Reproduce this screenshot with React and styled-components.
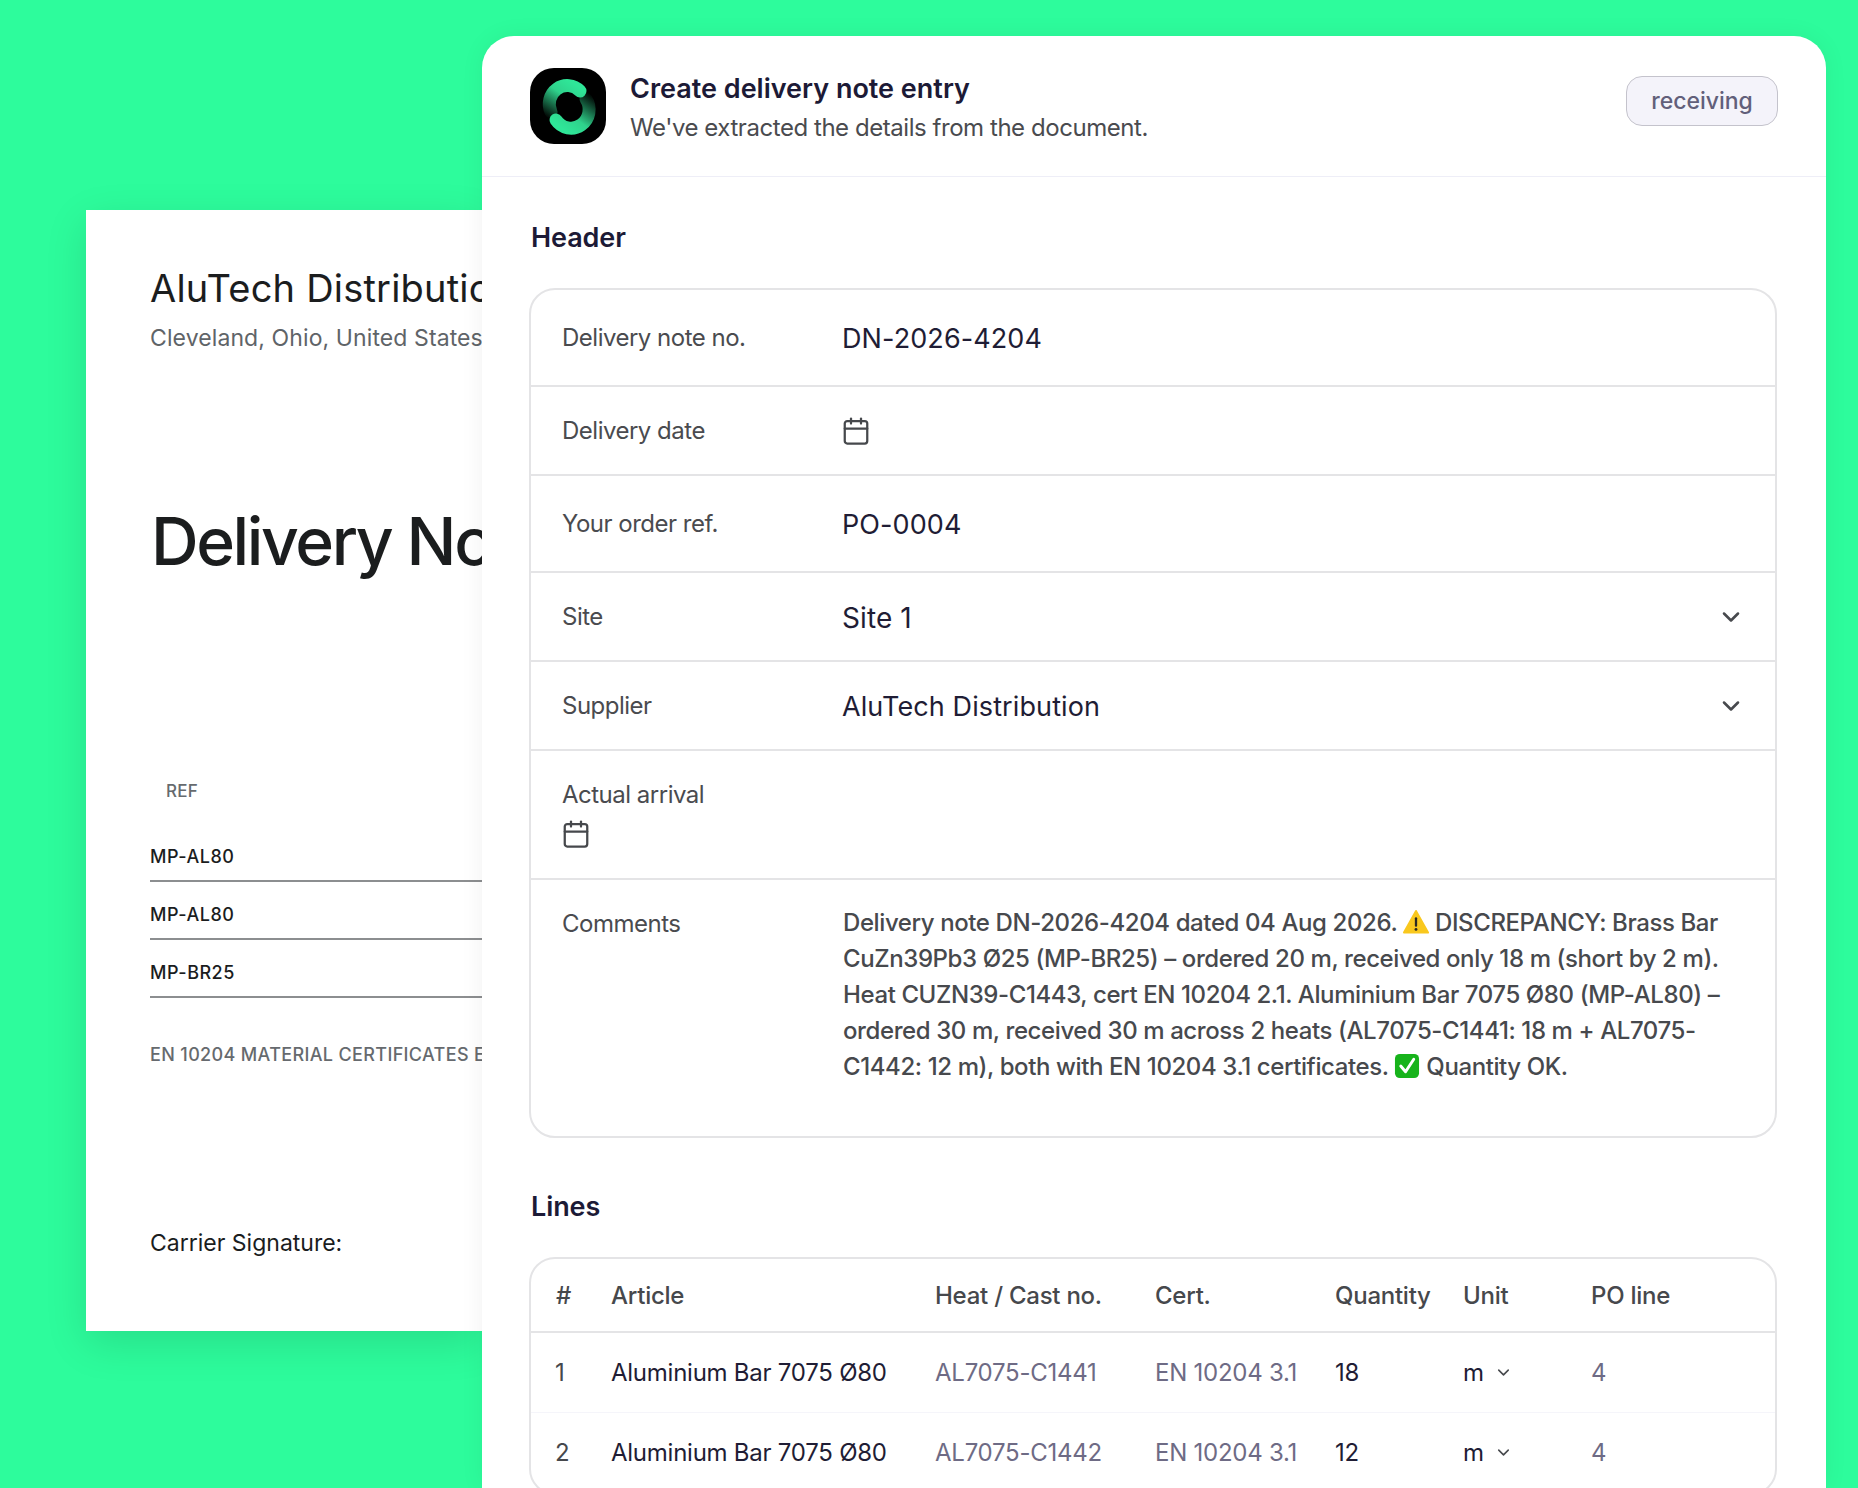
import React from "react";
import styled, { createGlobalStyle } from "styled-components";
import { Calendar, ChevronDown } from "lucide-react";

const GlobalStyle = createGlobalStyle`
  html, body {
    margin: 0;
    padding: 0;
    height: 1488px;
    overflow: hidden;
    background: #2dfc9c;
    font-family: Inter, "Liberation Sans", sans-serif;
  }
  * {
    box-sizing: border-box;
  }
`;

const Stage = styled.div`
  display: flex;
  align-items: flex-start;
  height: 1488px;
  padding: 36px 0 0 86px;
  overflow: hidden;
`;

// Paper document behind the form

const Paper = styled.div`
  flex: none;
  width: 396px;
  height: 1121px;
  margin-top: 174px;
  padding-left: 64px;
  background: #fff;
  box-shadow: 0 12px 40px rgba(0, 0, 0, 0.12);
  overflow: hidden;
  white-space: nowrap;
  color: #1b1d1e;
`;

const Company = styled.div`
  margin-top: 54px;
  font-size: 38px;
  line-height: 48px;
  letter-spacing: 0.2px;
`;

const Place = styled.div`
  margin-top: 11px;
  font-size: 23px;
  line-height: 30px;
  letter-spacing: 0.1px;
  color: #5f6468;
`;

const PaperTitle = styled.div`
  margin: 146px 0 0 1px;
  font-size: 66px;
  line-height: 84px;
  font-weight: 450;
  letter-spacing: -2.4px;
`;

const RefLabel = styled.div`
  margin: 198px 0 23px 16px;
  font-size: 17px;
  line-height: 20px;
  font-weight: 500;
  letter-spacing: 0.3px;
  color: #666a6e;
`;

const RefRow = styled.div`
  height: 58px;
  padding-top: 21px;
  border-bottom: 2px solid #8c8e90;
  font-size: 18px;
  line-height: 24px;
  font-weight: 500;
  letter-spacing: 0.5px;
`;

const CertNote = styled.div`
  margin-top: 45px;
  font-size: 18px;
  line-height: 24px;
  font-weight: 500;
  letter-spacing: 0.35px;
  color: #666a6e;
`;

const Signature = styled.div`
  margin-top: 161px;
  font-size: 23px;
  line-height: 30px;
`;

// Form card

const Card = styled.div`
  position: relative;
  flex: none;
  width: 1344px;
  height: 1452px;
  border-radius: 32px 32px 0 0;
  background: #fff;
  box-shadow: 0 0 24px rgba(0, 0, 0, 0.06);
  overflow: hidden;
  color: #1c1a36;
`;

const CardHeader = styled.header`
  display: flex;
  align-items: center;
  gap: 24px;
  height: 141px;
  padding: 0 48px;
  border-bottom: 1px solid #eeeef7;
`;

const HeaderText = styled.div`
  flex: 1;
  padding-top: 3px;
`;

const CardTitle = styled.div`
  font-size: 27px;
  line-height: 36px;
  font-weight: 600;
`;

const CardSubtitle = styled.div`
  margin-top: 5px;
  font-size: 24px;
  line-height: 32px;
  letter-spacing: -0.45px;
  color: #4a4b4f;
`;

const Badge = styled.span`
  display: flex;
  align-items: center;
  justify-content: center;
  width: 152px;
  height: 50px;
  margin-top: -10px;
  border: 1px solid #c4c3cc;
  border-radius: 16px;
  background: #f4f3fa;
  font-size: 23px;
  font-weight: 500;
  color: #625f7a;
`;

const Content = styled.div`
  padding: 45px 49px 0 47px;
`;

const SectionTitle = styled.h2`
  margin: ${({ $top }) => $top || 0}px 0 ${({ $bottom }) => $bottom}px;
  padding-left: 2px;
  font-size: 27px;
  line-height: 32px;
  font-weight: 600;
  letter-spacing: -0.1px;
`;

const Panel = styled.div`
  border: 2px solid #e4e4e6;
  border-radius: 26px;
  overflow: hidden;
`;

const FieldRow = styled.div`
  display: grid;
  grid-template-columns: 280px 1fr auto;
  align-items: center;
  height: ${({ $height }) => $height}px;
  padding: 0 30px 0 31px;
  border-bottom: 2px solid #e4e4e6;
  &:last-child {
    border-bottom: 0;
  }
`;

const StackedField = styled(FieldRow)`
  display: flex;
  flex-direction: column;
  align-items: flex-start;
  justify-content: flex-start;
  padding-top: 26px;
  gap: 6px;
`;

const CommentField = styled(FieldRow)`
  align-items: start;
  padding-top: 26px;
`;

const FieldLabel = styled.div`
  font-size: 24px;
  line-height: 36px;
  letter-spacing: -0.5px;
  color: #4a4b4f;
`;

const FieldValue = styled.div`
  margin-top: ${({ $lift }) => ($lift ? 2 : 3)}px;
  font-size: ${({ $size }) => $size || 27}px;
  line-height: 36px;
  letter-spacing: 0.1px;
  color: #1f1d35;
`;

const CalendarIcon = styled(Calendar)`
  display: block;
  margin-left: ${({ $shift }) => $shift || 0}px;
  color: #46484c;
`;

const SelectIcon = styled(ChevronDown)`
  display: block;
  color: #47494d;
`;

const Comments = styled.div`
  margin-top: -1px;
  padding-left: 1px;
  font-size: 24px;
  line-height: 36px;
  font-weight: 500;
  letter-spacing: -0.4px;
  color: #47494d;
  white-space: nowrap;
`;

const Emoji = styled.svg`
  display: inline-block;
  width: 26px;
  height: 26px;
  vertical-align: -4px;
`;

const LineRow = styled.div`
  display: grid;
  grid-template-columns: 55px 324px 220px 180px 128px 128px 1fr;
  align-items: center;
  height: ${({ $head }) => ($head ? 74 : 80)}px;
  padding-left: 25px;
  border-bottom: ${({ $head }) => ($head ? "2px solid #e4e4e6" : "1px solid #f5f5fa")};
  font-size: 24px;
  font-weight: ${({ $head }) => ($head ? 500 : 400)};
  letter-spacing: -0.25px;
  color: ${({ $head }) => ($head ? "#46484c" : "#1f1d35")};
`;

const Cell = styled.div`
  white-space: nowrap;
  color: ${({ $muted }) => ($muted ? "#6e6b85" : "inherit")};
`;

const RowNumber = styled(Cell)`
  margin-left: -1px;
  color: #46484c;
`;

const UnitCell = styled(Cell)`
  display: flex;
  align-items: center;
  gap: 10px;
`;

const WarningEmoji = () => (
  <Emoji viewBox="0 0 27 27">
    <path d="M13.5 2 L26 24.5 H1 Z" fill="#f9c81e" stroke="#f9c81e" strokeWidth="2" strokeLinejoin="round" />
    <rect x="12.3" y="8.5" width="2.4" height="10" rx="1.2" fill="#2b2a24" />
    <circle cx="13.5" cy="21.2" r="1.5" fill="#2b2a24" />
  </Emoji>
);

const CheckEmoji = () => (
  <Emoji viewBox="0 0 27 27">
    <rect x="1" y="1" width="25" height="25" rx="5" fill="#17b31b" />
    <path d="M7 13.5 L12 19.5 L20.5 6.5" fill="none" stroke="#fff" strokeWidth="3" strokeLinecap="round" strokeLinejoin="round" />
  </Emoji>
);

const Logo = () => (
  <svg width="76" height="76" viewBox="0 0 76 76" style={{ flex: "none" }}>
    <defs>
      <linearGradient id="arcTop" gradientUnits="userSpaceOnUse" x1="44" y1="16" x2="20" y2="52">
        <stop offset="0" stopColor="#2fe698" />
        <stop offset="0.35" stopColor="#2fd28c" />
        <stop offset="1" stopColor="#2fd28c" stopOpacity="0" />
      </linearGradient>
      <linearGradient id="arcBottom" gradientUnits="userSpaceOnUse" x1="32" y1="60" x2="58" y2="24">
        <stop offset="0" stopColor="#2fe698" />
        <stop offset="0.35" stopColor="#2fd28c" />
        <stop offset="1" stopColor="#2fd28c" stopOpacity="0" />
      </linearGradient>
    </defs>
    <rect width="76" height="76" rx="24" fill="#000" />
    <path d="M50 23 A 18 18.5 0 0 0 21 44" fill="none" stroke="url(#arcTop)" strokeWidth="13" strokeLinecap="round" />
    <path d="M26 52 A 18 18.5 0 0 0 56 31" fill="none" stroke="url(#arcBottom)" strokeWidth="13" strokeLinecap="round" />
  </svg>
);

const lines = [
  { n: 1, article: "Aluminium Bar 7075 Ø80", heat: "AL7075-C1441", qty: 18 },
  { n: 2, article: "Aluminium Bar 7075 Ø80", heat: "AL7075-C1442", qty: 12 },
];

export default function App() {
  return (
    <>
      <GlobalStyle />
      <Stage>
        <Paper>
          <Company>AluTech Distribution</Company>
          <Place>Cleveland, Ohio, United States</Place>
          <PaperTitle>Delivery Note</PaperTitle>
          <RefLabel>REF</RefLabel>
          <RefRow>MP-AL80</RefRow>
          <RefRow>MP-AL80</RefRow>
          <RefRow>MP-BR25</RefRow>
          <CertNote>EN 10204 MATERIAL CERTIFICATES ENCLOSED</CertNote>
          <Signature>Carrier Signature:</Signature>
        </Paper>

        <Card>
          <CardHeader>
            <Logo />
            <HeaderText>
              <CardTitle>Create delivery note entry</CardTitle>
              <CardSubtitle>We've extracted the details from the document.</CardSubtitle>
            </HeaderText>
            <Badge>receiving</Badge>
          </CardHeader>

          <Content>
            <SectionTitle $bottom={34}>Header</SectionTitle>
            <Panel>
              <FieldRow $height={97}>
                <FieldLabel>Delivery note no.</FieldLabel>
                <FieldValue>DN-2026-4204</FieldValue>
              </FieldRow>
              <FieldRow $height={89}>
                <FieldLabel>Delivery date</FieldLabel>
                <CalendarIcon size={30} strokeWidth={1.8} $shift={-1} />
              </FieldRow>
              <FieldRow $height={97}>
                <FieldLabel>Your order ref.</FieldLabel>
                <FieldValue>PO-0004</FieldValue>
              </FieldRow>
              <FieldRow $height={89}>
                <FieldLabel>Site</FieldLabel>
                <FieldValue $size={28} $lift>Site 1</FieldValue>
                <SelectIcon size={28} strokeWidth={2.2} />
              </FieldRow>
              <FieldRow $height={89}>
                <FieldLabel>Supplier</FieldLabel>
                <FieldValue>AluTech Distribution</FieldValue>
                <SelectIcon size={28} strokeWidth={2.2} />
              </FieldRow>
              <StackedField $height={129}>
                <FieldLabel>Actual arrival</FieldLabel>
                <CalendarIcon size={30} strokeWidth={1.8} $shift={-1} />
              </StackedField>
              <CommentField $height={256}>
                <FieldLabel>Comments</FieldLabel>
                <Comments>
                  Delivery note DN-2026-4204 dated 04 Aug 2026. <WarningEmoji /> DISCREPANCY: Brass Bar
                  <br />
                  CuZn39Pb3 Ø25 (MP-BR25) – ordered 20 m, received only 18 m (short by 2 m).
                  <br />
                  Heat CUZN39-C1443, cert EN 10204 2.1. Aluminium Bar 7075 Ø80 (MP-AL80) –
                  <br />
                  ordered 30 m, received 30 m across 2 heats (AL7075-C1441: 18 m + AL7075-
                  <br />
                  C1442: 12 m), both with EN 10204 3.1 certificates. <CheckEmoji /> Quantity OK.
                </Comments>
              </CommentField>
            </Panel>

            <SectionTitle $top={53} $bottom={34}>Lines</SectionTitle>
            <Panel>
              <LineRow $head>
                <Cell>#</Cell>
                <Cell>Article</Cell>
                <Cell>Heat / Cast no.</Cell>
                <Cell>Cert.</Cell>
                <Cell>Quantity</Cell>
                <Cell>Unit</Cell>
                <Cell>PO line</Cell>
              </LineRow>
              {lines.map((line) => (
                <LineRow key={line.n}>
                  <RowNumber>{line.n}</RowNumber>
                  <Cell>{line.article}</Cell>
                  <Cell $muted>{line.heat}</Cell>
                  <Cell $muted>EN 10204 3.1</Cell>
                  <Cell>{line.qty}</Cell>
                  <UnitCell>
                    m <ChevronDown size={19} strokeWidth={2} color="#47494d" />
                  </UnitCell>
                  <Cell $muted>4</Cell>
                </LineRow>
              ))}
            </Panel>
          </Content>
        </Card>
      </Stage>
    </>
  );
}
